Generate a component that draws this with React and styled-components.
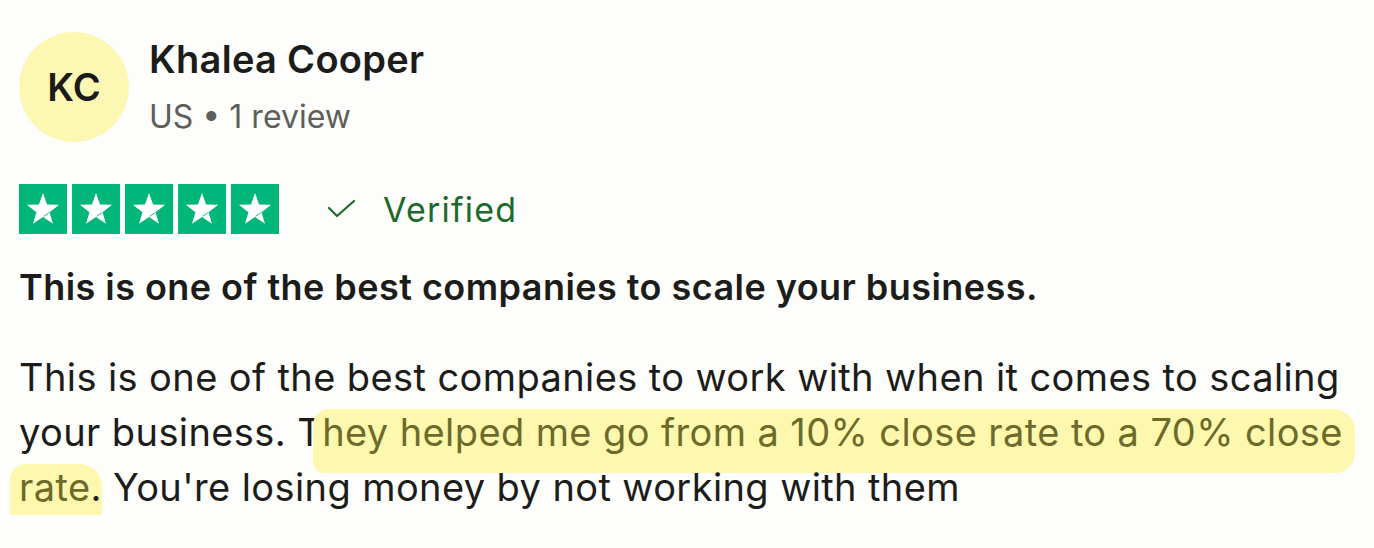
import React from 'react';
import styled, { createGlobalStyle } from 'styled-components';

const GlobalStyle = createGlobalStyle`
  html, body { margin: 0; padding: 0; background: #fdfdfb; }
  body { font-family: Inter, "Liberation Sans", sans-serif; color: #1c1c1a; }
`;

const review = {
  initials: 'KC',
  name: 'Khalea Cooper',
  meta: 'US • 1 review',
  rating: 5,
  title: 'This is one of the best companies to scale your business.',
};

function Star() {
  return (
    <svg width="48" height="50" viewBox="0 0 48 50">
      <polygon
        fill="#fff"
        points="24,9 28.06,20.42 40.17,20.75 30.56,28.13 33.99,39.75 24,32.9 14.01,39.75 17.44,28.13 7.83,20.75 19.94,20.42"
      />
      <line x1="30.2" y1="28.6" x2="24.6" y2="32.4" stroke="#00b67a" strokeWidth="0.9" />
    </svg>
  );
}

function Check() {
  return (
    <svg width="30" height="22" viewBox="0 0 30 22">
      <polyline points="2,10 10,18 27,3" fill="none" stroke="#1c6b2a" strokeWidth="2.2" strokeLinecap="round" strokeLinejoin="round" />
    </svg>
  );
}

export default function App() {
  return (
    <>
      <GlobalStyle />
      <Card>
        <Header>
          <Avatar>{review.initials}</Avatar>
          <Who>
            <Name>{review.name}</Name>
            <Meta>{review.meta}</Meta>
          </Who>
        </Header>
        <RatingRow>
          <Stars>
            {Array.from({ length: review.rating }).map((_, i) => (
              <StarBox key={i}><Star /></StarBox>
            ))}
          </Stars>
          <Verified><Check />Verified</Verified>
        </RatingRow>
        <Title>{review.title}</Title>
        <Body>
          This is one of the best companies to work with when it comes to scaling your business. T
          <Marker>hey helped me go from a 10% close rate to a 70% close rate</Marker>
          . You're losing money by not working with them
        </Body>
      </Card>
    </>
  );
}

const Card = styled.div`
  padding: 32px 19px 0 19px;
  display: flex;
  flex-direction: column;
`;
const Header = styled.div`
  display: flex;
  align-items: flex-start;
  gap: 20px;
`;
const Avatar = styled.div`
  width: 110px;
  height: 110px;
  border-radius: 50%;
  background: #fdf7b4;
  display: flex;
  align-items: center;
  justify-content: center;
  font-size: 38px;
  font-weight: 600;
  color: #1a1a18;
`;
const Who = styled.div`
  display: flex;
  flex-direction: column;
  padding-top: 3px;
`;
const Name = styled.div`
  font-size: 38px;
  font-weight: 600;
  line-height: 48px;
  letter-spacing: 0.3px;
  color: #1c1c1a;
`;
const Meta = styled.div`
  font-size: 32px;
  line-height: 52px;
  margin-top: 8px;
  color: #5e5e5a;
`;
const RatingRow = styled.div`
  display: flex;
  align-items: center;
  margin-top: 41px;
  gap: 48px;
`;
const Stars = styled.div`
  display: flex;
  gap: 5px;
`;
const StarBox = styled.div`
  width: 48px;
  height: 50px;
  background: #00b67a;
  display: flex;
`;
const Verified = styled.div`
  display: flex;
  align-items: center;
  gap: 26px;
  font-size: 34px;
  color: #1c6b2a;
  letter-spacing: 1.2px;
`;
const Title = styled.h2`
  margin: 31px 0 0 0;
  font-size: 36px;
  line-height: 44px;
  font-weight: 600;
  letter-spacing: 0.45px;
  color: #1c1c1a;
`;
const Body = styled.p`
  margin: 41px 0 0 0;
  font-size: 38px;
  line-height: 55px;
  letter-spacing: 0.4px;
  color: #1c1c1a;
  max-width: 1345px;
`;
const Marker = styled.span`
  background: #fdf8ae;
  color: #6d6a2a;
  padding: 0 12px 18px 9px;
  margin: 0 -12px 0 -9px;
  border-radius: 16px 22px 20px 12px;
  box-decoration-break: clone;
  -webkit-box-decoration-break: clone;
`;
